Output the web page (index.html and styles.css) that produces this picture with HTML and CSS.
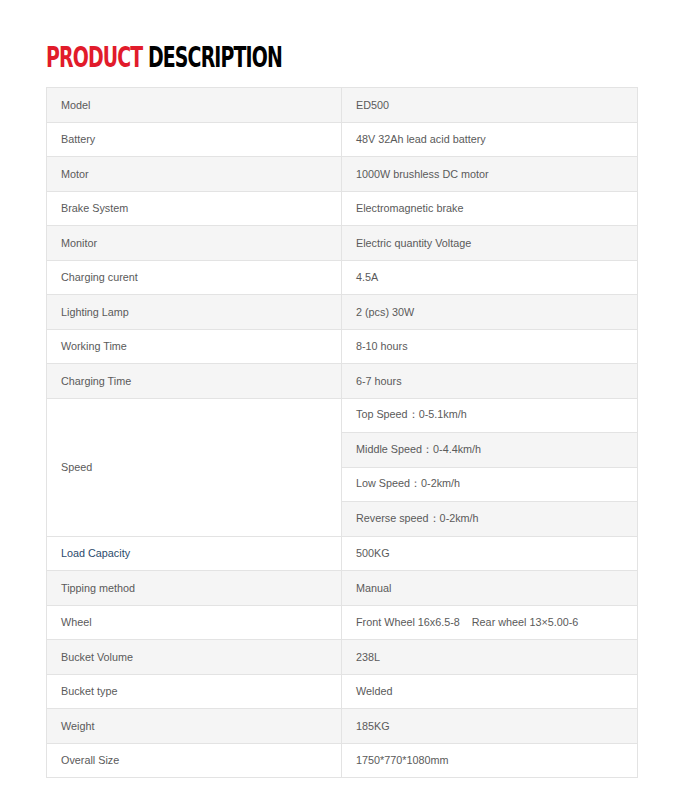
FILE: index.html
```html
<!DOCTYPE html>
<html lang="en">
<head>
<meta charset="utf-8">
<title>Product Description</title>
<link rel="stylesheet" href="styles.css">
</head>
<body>
<div class="wrap">
  <h2 class="title"><span class="red">PRODUCT</span> DESCRIPTION</h2>
  <table class="spec">
    <tbody>
      <tr><td class="k">Model</td><td>ED500</td></tr>
      <tr><td class="k">Battery</td><td>48V 32Ah lead acid battery</td></tr>
      <tr><td class="k">Motor</td><td>1000W brushless DC motor</td></tr>
      <tr><td class="k">Brake System</td><td>Electromagnetic brake</td></tr>
      <tr><td class="k">Monitor</td><td>Electric quantity Voltage</td></tr>
      <tr><td class="k">Charging curent</td><td>4.5A</td></tr>
      <tr><td class="k">Lighting Lamp</td><td>2 (pcs) 30W</td></tr>
      <tr><td class="k">Working Time</td><td>8-10 hours</td></tr>
      <tr><td class="k">Charging Time</td><td>6-7 hours</td></tr>
      <tr><td class="k white" rowspan="4">Speed</td><td>Top Speed：0-5.1km/h</td></tr>
      <tr><td>Middle Speed：0-4.4km/h</td></tr>
      <tr><td>Low Speed：0-2km/h</td></tr>
      <tr><td>Reverse speed：0-2km/h</td></tr>
      <tr><td class="k blue">Load Capacity</td><td>500KG</td></tr>
      <tr><td class="k">Tipping method</td><td>Manual</td></tr>
      <tr><td class="k">Wheel</td><td>Front Wheel 16x6.5-8&nbsp;&nbsp;&nbsp; Rear wheel 13×5.00-6</td></tr>
      <tr><td class="k">Bucket Volume</td><td>238L</td></tr>
      <tr><td class="k">Bucket type</td><td>Welded</td></tr>
      <tr><td class="k">Weight</td><td>185KG</td></tr>
      <tr><td class="k">Overall Size</td><td>1750*770*1080mm</td></tr>
    </tbody>
  </table>
</div>
</body>
</html>
```

FILE: styles.css
```css
html, body {
  margin: 0;
  padding: 0;
  background: #fff;
}
.wrap {
  padding: 40px 0 0 46px;
  width: 592px;
}
.title {
  margin: 0 0 13px 0;
  font-family: "DejaVu Sans", sans-serif;
  font-stretch: condensed;
  font-weight: bold;
  font-size: 29px;
  line-height: 34px;
  letter-spacing: -1.2px;
  color: #000;
  transform: scaleX(0.725);
  transform-origin: left center;
  white-space: nowrap;
}
.red {
  color: #e11b2b;
}
.spec {
  width: 592px;
  border-collapse: collapse;
  font-family: "Liberation Sans", Arial, sans-serif;
  font-size: 10.8px;
  color: #5a5a5a;
  table-layout: fixed;
}
.spec td {
  border: 1px solid #e3e3e3;
  padding: 0 14px;
  height: 33.5px;
  vertical-align: middle;
  text-align: left;
}
.spec td.k {
  width: 266px;
}
.spec tr:nth-child(odd) td {
  background: #f5f5f5;
}
.spec tr:nth-child(odd) td.white {
  background: #fff;
}
.spec td.blue {
  color: #2b4a6b;
}
```
